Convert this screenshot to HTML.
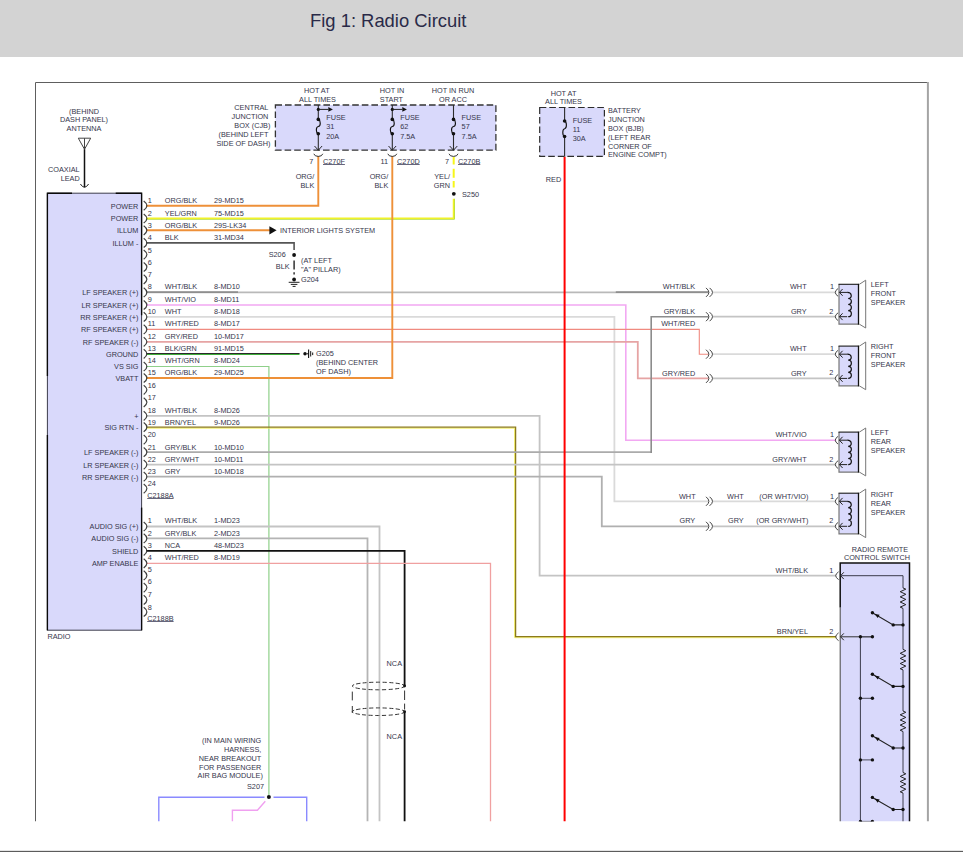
<!DOCTYPE html>
<html><head><meta charset="utf-8"><title>Fig 1: Radio Circuit</title>
<style>
html,body{margin:0;padding:0;background:#fff;}
body{width:963px;height:852px;overflow:hidden;position:relative;font-family:"Liberation Sans",sans-serif;}
#hdr{position:absolute;left:0;top:0;width:963px;height:57px;background:#d3d3d3;}
#ttl{position:absolute;left:310px;top:10.2px;font-size:18.4px;line-height:22px;color:#2a2a48;white-space:nowrap;font-family:"Liberation Sans",sans-serif;}
#btm{position:absolute;left:0;top:850px;width:963px;height:2px;background:linear-gradient(#e4e4e4 0,#e4e4e4 50%,#5c5c5c 50%,#5c5c5c 100%);}
svg{position:absolute;left:0;top:0;}
svg text{font-family:"Liberation Sans",sans-serif;}
</style></head><body>
<div id="hdr"></div><div id="ttl">Fig 1: Radio Circuit</div>
<svg width="963" height="852" viewBox="0 0 963 852">
<defs><clipPath id="cp"><rect x="0" y="60" width="963" height="761.5"/></clipPath></defs>
<g clip-path="url(#cp)">
<path d="M35.5 821.5 L35.5 82.5 L927 82.5" stroke="#5e5e5e" stroke-width="1" fill="none"/>
<path d="M927.9 82 L927.9 821.5" stroke="#a4a4a4" stroke-width="2" fill="none"/>
<rect x="47.4" y="193.2" width="94.1" height="437" fill="#d9d9fb"/>
<path d="M47.4 630.2 L47.4 193.2 L141.6 193.2 L141.6 630.2 Z" stroke="#3c3c4c" stroke-width="1.0" fill="none"/>
<path d="M47.4 376 L47.4 193.2 L72 193.2" stroke="#0a0a0a" stroke-width="1.35" fill="none"/>
<path d="M115.7 193.2 L141.6 193.2 L141.6 315.2" stroke="#0a0a0a" stroke-width="1.35" fill="none"/>
<path d="M141.6 507.6 L141.6 630.4" stroke="#0a0a0a" stroke-width="1.35" fill="none"/>
<path d="M47.4 630.4 L47.4 435" stroke="#0a0a0a" stroke-width="1.35" fill="none"/>
<path d="M146.0 205.7 L318.3 205.7 L318.3 156.0" stroke="#ee9038" stroke-width="1.9" fill="none" />
<path d="M146.0 219.2 L454.5 219.2 L454.5 198.8" stroke="#9ad64e" stroke-width="1.0" fill="none" />
<path d="M146.0 218.3 L453.6 218.3 L453.6 198.8" stroke="#f0f228" stroke-width="1.7" fill="none" />
<path d="M453.7 157.0 L453.7 164.6" stroke="#f6f61a" stroke-width="2.0" fill="none" />
<path d="M453.7 168.8 L453.7 177.7" stroke="#f6f61a" stroke-width="2.0" fill="none" />
<path d="M453.7 181.0 L453.7 187.6" stroke="#f6f61a" stroke-width="2.0" fill="none" />
<path d="M146.0 230.3 L270.0 230.3" stroke="#ee9038" stroke-width="1.9" fill="none" />
<path d="M269.4 226.2 L276.6 230.3 L269.4 234.4 Z" fill="#111"/>
<path d="M146.0 242.9 L294.1 242.9 L294.1 250.0" stroke="#555555" stroke-width="1.6" fill="none" />
<path d="M294.1 260.5 L294.1 269.5" stroke="#222" stroke-width="1.4" fill="none" />
<path d="M294.1 272.2 L294.1 274.4" stroke="#222" stroke-width="1.4" fill="none" />
<circle cx="294.1" cy="255.0" r="1.9" fill="#111"/>
<circle cx="294.1" cy="279.5" r="1.9" fill="#111"/>
<path d="M288.7 282.3 L299.5 282.3" stroke="#222" stroke-width="1.0" fill="none" />
<path d="M290.8 284.4 L297.4 284.4" stroke="#222" stroke-width="1.0" fill="none" />
<path d="M292.6 286.4 L295.6 286.4" stroke="#222" stroke-width="1.0" fill="none" />
<path d="M146.0 292.4 L708.5 292.4" stroke="#b9b9b9" stroke-width="1.8" fill="none" />
<path d="M146.0 292.0 L238.0 292.0" stroke="#5c5c5c" stroke-width="0.9" fill="none" />
<path d="M615.8 292.0 L708.5 292.0" stroke="#5c5c5c" stroke-width="0.9" fill="none" />
<path d="M713.0 292.4 L836.2 292.4" stroke="#dadada" stroke-width="1.8" fill="none" />
<path d="M146.0 305.0 L625.8 305.0 L625.8 440.2 L836.2 440.2" stroke="#f2a8f2" stroke-width="1.6" fill="none" />
<path d="M146.0 316.9 L614.4 316.9 L614.4 501.3 L708.5 501.3" stroke="#dadada" stroke-width="1.8" fill="none" />
<path d="M713.0 501.3 L836.2 501.3" stroke="#dadada" stroke-width="1.8" fill="none" />
<path d="M146.0 329.4 L699.3 329.4 L699.3 354.2 L708.5 354.2" stroke="#f08a80" stroke-width="1.1" fill="none" />
<path d="M713.0 354.2 L836.2 354.2" stroke="#dadada" stroke-width="1.8" fill="none" />
<path d="M146.0 341.8 L637.8 341.8 L637.8 378.4 L708.5 378.4" stroke="#e6a4a4" stroke-width="1.8" fill="none" />
<path d="M713.0 378.4 L836.2 378.4" stroke="#c4c4c4" stroke-width="1.8" fill="none" />
<path d="M146.0 354.3 L299.5 354.3" stroke="#3fae3a" stroke-width="1.6" fill="none" />
<path d="M146.0 353.5 L299.5 353.5" stroke="#2a2a2a" stroke-width="1.0" fill="none" />
<path d="M146.0 366.5 L268.9 366.5 L268.9 795.0" stroke="#8fd08a" stroke-width="1.2" fill="none" />
<path d="M146.0 415.8 L539.6 415.8 L539.6 575.7 L836.2 575.7" stroke="#c4c4c4" stroke-width="1.8" fill="none" />
<path d="M146.0 428.2 L514.6 428.2 L514.6 637.7 L836.2 637.7" stroke="#f0ee58" stroke-width="0.9" fill="none" />
<path d="M146.0 427.2 L515.6 427.2 L515.6 636.7 L836.2 636.7" stroke="#8c7a1c" stroke-width="1.3" fill="none" />
<path d="M146.0 452.2 L651.2 452.2" stroke="#ababab" stroke-width="1.8" fill="none" />
<path d="M651.2 453.1 L651.2 316.7 L708.5 316.7" stroke="#8c8c8c" stroke-width="1.6" fill="none" />
<path d="M713.0 316.7 L836.2 316.7" stroke="#c4c4c4" stroke-width="1.8" fill="none" />
<path d="M146.0 464.6 L836.2 464.6" stroke="#c4c4c4" stroke-width="1.8" fill="none" />
<path d="M146.0 476.7 L601.8 476.7 L601.8 526.3 L708.5 526.3" stroke="#b0b0b0" stroke-width="1.8" fill="none" />
<path d="M713.0 526.3 L836.2 526.3" stroke="#c4c4c4" stroke-width="1.8" fill="none" />
<path d="M146.0 526.5 L379.5 526.5 L379.5 821.5" stroke="#c4c4c4" stroke-width="1.8" fill="none" />
<path d="M146.0 538.4 L367.5 538.4 L367.5 821.5" stroke="#b4b4b4" stroke-width="1.8" fill="none" />
<path d="M146.0 550.8 L404.6 550.8 L404.6 686.2" stroke="#111" stroke-width="1.8" fill="none" />
<path d="M404.6 711.6 L404.6 821.5" stroke="#111" stroke-width="1.8" fill="none" />
<path d="M404.6 690.5 L404.6 700.0" stroke="#333" stroke-width="1.0" fill="none" />
<path d="M404.6 703.6 L404.6 709.5" stroke="#333" stroke-width="1.0" fill="none" />
<path d="M146.0 563.3 L490.5 563.3 L490.5 821.5" stroke="#f0a0a0" stroke-width="1.3" fill="none" />
<path d="M146.0 378.0 L392.3 378.0 L392.3 156.0" stroke="#ee9038" stroke-width="1.9" fill="none" />
<path d="M564.6 156.4 L564.6 821.5" stroke="#ff0000" stroke-width="2.0" fill="none" />
<path d="M158.8 821.5 L158.8 797.2 L264.5 797.2" stroke="#8a8aff" stroke-width="1.4" fill="none" />
<path d="M273.5 797.2 L306.7 797.2 L306.7 821.5" stroke="#8a8aff" stroke-width="1.4" fill="none" />
<path d="M232.4 821.5 L232.4 810.3 L257.4 810.3 L265.3 801.3" stroke="#f0a0f0" stroke-width="1.4" fill="none" />
<circle cx="268.9" cy="797.0" r="2.0" fill="#111"/>
<path d="M143.7 201.1 Q150.1 205.7 143.7 210.3" stroke="#404040" stroke-width="1.2" fill="none"/>
<text x="147.8" y="203.0" text-anchor="start" font-size="7.3" fill="#36364c" >1</text>
<text x="138.4" y="208.6" text-anchor="end" font-size="7.3" fill="#36364c" >POWER</text>
<text x="164.8" y="203.0" text-anchor="start" font-size="7.3" fill="#36364c" >ORG/BLK</text>
<text x="213.9" y="203.0" text-anchor="start" font-size="7.3" fill="#36364c" >29-MD15</text>
<path d="M143.7 213.9 Q150.1 218.5 143.7 223.1" stroke="#404040" stroke-width="1.2" fill="none"/>
<text x="147.8" y="216.0" text-anchor="start" font-size="7.3" fill="#36364c" >2</text>
<text x="138.4" y="221.4" text-anchor="end" font-size="7.3" fill="#36364c" >POWER</text>
<text x="164.8" y="216.0" text-anchor="start" font-size="7.3" fill="#36364c" >YEL/GRN</text>
<text x="213.9" y="216.0" text-anchor="start" font-size="7.3" fill="#36364c" >75-MD15</text>
<path d="M143.7 225.7 Q150.1 230.3 143.7 234.9" stroke="#404040" stroke-width="1.2" fill="none"/>
<text x="147.8" y="228.0" text-anchor="start" font-size="7.3" fill="#36364c" >3</text>
<text x="138.4" y="233.2" text-anchor="end" font-size="7.3" fill="#36364c" >ILLUM</text>
<text x="164.8" y="228.0" text-anchor="start" font-size="7.3" fill="#36364c" >ORG/BLK</text>
<text x="213.9" y="228.0" text-anchor="start" font-size="7.3" fill="#36364c" >29S-LK34</text>
<path d="M143.7 238.3 Q150.1 242.9 143.7 247.5" stroke="#404040" stroke-width="1.2" fill="none"/>
<text x="147.8" y="240.0" text-anchor="start" font-size="7.3" fill="#36364c" >4</text>
<text x="138.4" y="245.8" text-anchor="end" font-size="7.3" fill="#36364c" >ILLUM -</text>
<text x="164.8" y="240.0" text-anchor="start" font-size="7.3" fill="#36364c" >BLK</text>
<text x="213.9" y="240.0" text-anchor="start" font-size="7.3" fill="#36364c" >31-MD34</text>
<path d="M143.7 250.0 Q150.1 254.6 143.7 259.2" stroke="#404040" stroke-width="1.2" fill="none"/>
<text x="147.8" y="253.0" text-anchor="start" font-size="7.3" fill="#36364c" >5</text>
<path d="M143.7 262.4 Q150.1 267.0 143.7 271.6" stroke="#404040" stroke-width="1.2" fill="none"/>
<text x="147.8" y="265.0" text-anchor="start" font-size="7.3" fill="#36364c" >6</text>
<path d="M143.7 274.7 Q150.1 279.3 143.7 283.9" stroke="#404040" stroke-width="1.2" fill="none"/>
<text x="147.8" y="277.0" text-anchor="start" font-size="7.3" fill="#36364c" >7</text>
<path d="M143.7 287.8 Q150.1 292.4 143.7 297.0" stroke="#404040" stroke-width="1.2" fill="none"/>
<text x="147.8" y="289.0" text-anchor="start" font-size="7.3" fill="#36364c" >8</text>
<text x="138.4" y="295.3" text-anchor="end" font-size="7.3" fill="#36364c" >LF SPEAKER (+)</text>
<text x="164.8" y="289.0" text-anchor="start" font-size="7.3" fill="#36364c" >WHT/BLK</text>
<text x="213.9" y="289.0" text-anchor="start" font-size="7.3" fill="#36364c" >8-MD10</text>
<path d="M143.7 300.4 Q150.1 305.0 143.7 309.6" stroke="#404040" stroke-width="1.2" fill="none"/>
<text x="147.8" y="302.0" text-anchor="start" font-size="7.3" fill="#36364c" >9</text>
<text x="138.4" y="307.9" text-anchor="end" font-size="7.3" fill="#36364c" >LR SPEAKER (+)</text>
<text x="164.8" y="302.0" text-anchor="start" font-size="7.3" fill="#36364c" >WHT/VIO</text>
<text x="213.9" y="302.0" text-anchor="start" font-size="7.3" fill="#36364c" >8-MD11</text>
<path d="M143.7 312.3 Q150.1 316.9 143.7 321.5" stroke="#404040" stroke-width="1.2" fill="none"/>
<text x="147.8" y="314.0" text-anchor="start" font-size="7.3" fill="#36364c" >10</text>
<text x="138.4" y="319.8" text-anchor="end" font-size="7.3" fill="#36364c" >RR SPEAKER (+)</text>
<text x="164.8" y="314.0" text-anchor="start" font-size="7.3" fill="#36364c" >WHT</text>
<text x="213.9" y="314.0" text-anchor="start" font-size="7.3" fill="#36364c" >8-MD18</text>
<path d="M143.7 324.8 Q150.1 329.4 143.7 334.0" stroke="#404040" stroke-width="1.2" fill="none"/>
<text x="147.8" y="326.0" text-anchor="start" font-size="7.3" fill="#36364c" >11</text>
<text x="138.4" y="332.3" text-anchor="end" font-size="7.3" fill="#36364c" >RF SPEAKER (+)</text>
<text x="164.8" y="326.0" text-anchor="start" font-size="7.3" fill="#36364c" >WHT/RED</text>
<text x="213.9" y="326.0" text-anchor="start" font-size="7.3" fill="#36364c" >8-MD17</text>
<path d="M143.7 337.2 Q150.1 341.8 143.7 346.4" stroke="#404040" stroke-width="1.2" fill="none"/>
<text x="147.8" y="339.0" text-anchor="start" font-size="7.3" fill="#36364c" >12</text>
<text x="138.4" y="344.7" text-anchor="end" font-size="7.3" fill="#36364c" >RF SPEAKER (-)</text>
<text x="164.8" y="339.0" text-anchor="start" font-size="7.3" fill="#36364c" >GRY/RED</text>
<text x="213.9" y="339.0" text-anchor="start" font-size="7.3" fill="#36364c" >10-MD17</text>
<path d="M143.7 349.2 Q150.1 353.8 143.7 358.4" stroke="#404040" stroke-width="1.2" fill="none"/>
<text x="147.8" y="351.0" text-anchor="start" font-size="7.3" fill="#36364c" >13</text>
<text x="138.4" y="356.7" text-anchor="end" font-size="7.3" fill="#36364c" >GROUND</text>
<text x="164.8" y="351.0" text-anchor="start" font-size="7.3" fill="#36364c" >BLK/GRN</text>
<text x="213.9" y="351.0" text-anchor="start" font-size="7.3" fill="#36364c" >91-MD15</text>
<path d="M143.7 361.9 Q150.1 366.5 143.7 371.1" stroke="#404040" stroke-width="1.2" fill="none"/>
<text x="147.8" y="363.0" text-anchor="start" font-size="7.3" fill="#36364c" >14</text>
<text x="138.4" y="369.4" text-anchor="end" font-size="7.3" fill="#36364c" >VS SIG</text>
<text x="164.8" y="363.0" text-anchor="start" font-size="7.3" fill="#36364c" >WHT/GRN</text>
<text x="213.9" y="363.0" text-anchor="start" font-size="7.3" fill="#36364c" >8-MD24</text>
<path d="M143.7 373.4 Q150.1 378.0 143.7 382.6" stroke="#404040" stroke-width="1.2" fill="none"/>
<text x="147.8" y="375.0" text-anchor="start" font-size="7.3" fill="#36364c" >15</text>
<text x="138.4" y="380.9" text-anchor="end" font-size="7.3" fill="#36364c" >VBATT</text>
<text x="164.8" y="375.0" text-anchor="start" font-size="7.3" fill="#36364c" >ORG/BLK</text>
<text x="213.9" y="375.0" text-anchor="start" font-size="7.3" fill="#36364c" >29-MD25</text>
<path d="M143.7 385.2 Q150.1 389.8 143.7 394.4" stroke="#404040" stroke-width="1.2" fill="none"/>
<text x="147.8" y="388.0" text-anchor="start" font-size="7.3" fill="#36364c" >16</text>
<path d="M143.7 397.7 Q150.1 402.3 143.7 406.9" stroke="#404040" stroke-width="1.2" fill="none"/>
<text x="147.8" y="400.0" text-anchor="start" font-size="7.3" fill="#36364c" >17</text>
<path d="M143.7 411.2 Q150.1 415.8 143.7 420.4" stroke="#404040" stroke-width="1.2" fill="none"/>
<text x="147.8" y="413.0" text-anchor="start" font-size="7.3" fill="#36364c" >18</text>
<text x="138.4" y="418.7" text-anchor="end" font-size="7.3" fill="#36364c" >+</text>
<text x="164.8" y="413.0" text-anchor="start" font-size="7.3" fill="#36364c" >WHT/BLK</text>
<text x="213.9" y="413.0" text-anchor="start" font-size="7.3" fill="#36364c" >8-MD26</text>
<path d="M143.7 422.6 Q150.1 427.2 143.7 431.8" stroke="#404040" stroke-width="1.2" fill="none"/>
<text x="147.8" y="425.0" text-anchor="start" font-size="7.3" fill="#36364c" >19</text>
<text x="138.4" y="430.1" text-anchor="end" font-size="7.3" fill="#36364c" >SIG RTN -</text>
<text x="164.8" y="425.0" text-anchor="start" font-size="7.3" fill="#36364c" >BRN/YEL</text>
<text x="213.9" y="425.0" text-anchor="start" font-size="7.3" fill="#36364c" >9-MD26</text>
<path d="M143.7 435.0 Q150.1 439.6 143.7 444.2" stroke="#404040" stroke-width="1.2" fill="none"/>
<text x="147.8" y="437.0" text-anchor="start" font-size="7.3" fill="#36364c" >20</text>
<path d="M143.7 447.6 Q150.1 452.2 143.7 456.8" stroke="#404040" stroke-width="1.2" fill="none"/>
<text x="147.8" y="450.0" text-anchor="start" font-size="7.3" fill="#36364c" >21</text>
<text x="138.4" y="455.1" text-anchor="end" font-size="7.3" fill="#36364c" >LF SPEAKER (-)</text>
<text x="164.8" y="450.0" text-anchor="start" font-size="7.3" fill="#36364c" >GRY/BLK</text>
<text x="213.9" y="450.0" text-anchor="start" font-size="7.3" fill="#36364c" >10-MD10</text>
<path d="M143.7 460.0 Q150.1 464.6 143.7 469.2" stroke="#404040" stroke-width="1.2" fill="none"/>
<text x="147.8" y="462.0" text-anchor="start" font-size="7.3" fill="#36364c" >22</text>
<text x="138.4" y="467.5" text-anchor="end" font-size="7.3" fill="#36364c" >LR SPEAKER (-)</text>
<text x="164.8" y="462.0" text-anchor="start" font-size="7.3" fill="#36364c" >GRY/WHT</text>
<text x="213.9" y="462.0" text-anchor="start" font-size="7.3" fill="#36364c" >10-MD11</text>
<path d="M143.7 472.1 Q150.1 476.7 143.7 481.3" stroke="#404040" stroke-width="1.2" fill="none"/>
<text x="147.8" y="474.0" text-anchor="start" font-size="7.3" fill="#36364c" >23</text>
<text x="138.4" y="479.6" text-anchor="end" font-size="7.3" fill="#36364c" >RR SPEAKER (-)</text>
<text x="164.8" y="474.0" text-anchor="start" font-size="7.3" fill="#36364c" >GRY</text>
<text x="213.9" y="474.0" text-anchor="start" font-size="7.3" fill="#36364c" >10-MD18</text>
<path d="M143.7 484.0 Q150.1 488.6 143.7 493.2" stroke="#404040" stroke-width="1.2" fill="none"/>
<text x="147.8" y="486.0" text-anchor="start" font-size="7.3" fill="#36364c" >24</text>
<path d="M143.7 521.9 Q150.1 526.5 143.7 531.1" stroke="#404040" stroke-width="1.2" fill="none"/>
<text x="147.8" y="523.0" text-anchor="start" font-size="7.3" fill="#36364c" >1</text>
<text x="138.4" y="529.4" text-anchor="end" font-size="7.3" fill="#36364c" >AUDIO SIG (+)</text>
<text x="164.8" y="523.0" text-anchor="start" font-size="7.3" fill="#36364c" >WHT/BLK</text>
<text x="213.9" y="523.0" text-anchor="start" font-size="7.3" fill="#36364c" >1-MD23</text>
<path d="M143.7 533.8 Q150.1 538.4 143.7 543.0" stroke="#404040" stroke-width="1.2" fill="none"/>
<text x="147.8" y="536.0" text-anchor="start" font-size="7.3" fill="#36364c" >2</text>
<text x="138.4" y="541.3" text-anchor="end" font-size="7.3" fill="#36364c" >AUDIO SIG (-)</text>
<text x="164.8" y="536.0" text-anchor="start" font-size="7.3" fill="#36364c" >GRY/BLK</text>
<text x="213.9" y="536.0" text-anchor="start" font-size="7.3" fill="#36364c" >2-MD23</text>
<path d="M143.7 546.2 Q150.1 550.8 143.7 555.4" stroke="#404040" stroke-width="1.2" fill="none"/>
<text x="147.8" y="548.0" text-anchor="start" font-size="7.3" fill="#36364c" >3</text>
<text x="138.4" y="553.7" text-anchor="end" font-size="7.3" fill="#36364c" >SHIELD</text>
<text x="164.8" y="548.0" text-anchor="start" font-size="7.3" fill="#36364c" >NCA</text>
<text x="213.9" y="548.0" text-anchor="start" font-size="7.3" fill="#36364c" >48-MD23</text>
<path d="M143.7 558.7 Q150.1 563.3 143.7 567.9" stroke="#404040" stroke-width="1.2" fill="none"/>
<text x="147.8" y="560.0" text-anchor="start" font-size="7.3" fill="#36364c" >4</text>
<text x="138.4" y="566.2" text-anchor="end" font-size="7.3" fill="#36364c" >AMP ENABLE</text>
<text x="164.8" y="560.0" text-anchor="start" font-size="7.3" fill="#36364c" >WHT/RED</text>
<text x="213.9" y="560.0" text-anchor="start" font-size="7.3" fill="#36364c" >8-MD19</text>
<path d="M143.7 570.8 Q150.1 575.4 143.7 580.0" stroke="#404040" stroke-width="1.2" fill="none"/>
<text x="147.8" y="572.0" text-anchor="start" font-size="7.3" fill="#36364c" >5</text>
<path d="M143.7 583.0 Q150.1 587.6 143.7 592.2" stroke="#404040" stroke-width="1.2" fill="none"/>
<text x="147.8" y="584.0" text-anchor="start" font-size="7.3" fill="#36364c" >6</text>
<path d="M143.7 595.3 Q150.1 599.9 143.7 604.5" stroke="#404040" stroke-width="1.2" fill="none"/>
<text x="147.8" y="597.0" text-anchor="start" font-size="7.3" fill="#36364c" >7</text>
<path d="M143.7 607.3 Q150.1 611.9 143.7 616.5" stroke="#404040" stroke-width="1.2" fill="none"/>
<text x="147.8" y="610.0" text-anchor="start" font-size="7.3" fill="#36364c" >8</text>
<text x="147.2" y="498.0" text-anchor="start" font-size="7.3" fill="#36364c" >C2188A</text>
<path d="M147.2 498.5 L173.6 498.5" stroke="#66667c" stroke-width="1" fill="none"/>
<text x="147.2" y="621.0" text-anchor="start" font-size="7.3" fill="#36364c" >C2188B</text>
<path d="M147.2 621.5 L173.6 621.5" stroke="#66667c" stroke-width="1" fill="none"/>
<text x="47.4" y="639.0" text-anchor="start" font-size="7.3" fill="#36364c" >RADIO</text>
<path d="M78.3 138.2 L90.7 138.2 L84.5 149.3 Z" stroke="#444" stroke-width="1" fill="none"/>
<path d="M84.5 138.2 L84.5 149.3" stroke="#444" stroke-width="1.0" fill="none" />
<path d="M84.5 149.3 L84.5 187.3" stroke="#111" stroke-width="1.5" fill="none" />
<path d="M80.4 184 Q84.5 190.5 88.6 184" stroke="#222" stroke-width="1" fill="none"/>
<text x="84.0" y="113.8" text-anchor="middle" font-size="7.3" fill="#36364c" >(BEHIND</text>
<text x="84.0" y="122.3" text-anchor="middle" font-size="7.3" fill="#36364c" >DASH PANEL)</text>
<text x="84.0" y="130.8" text-anchor="middle" font-size="7.3" fill="#36364c" >ANTENNA</text>
<text x="79.7" y="171.8" text-anchor="end" font-size="7.3" fill="#36364c" >COAXIAL</text>
<text x="79.7" y="180.8" text-anchor="end" font-size="7.3" fill="#36364c" >LEAD</text>
<rect x="275.4" y="105" width="220.5" height="45.2" fill="#d9d9fb" stroke="#333" stroke-width="1.3" stroke-dasharray="6.6 3"/>
<path d="M318.3 105.0 L318.3 119.4" stroke="#2c2c2c" stroke-width="1.1" fill="none" />
<path d="M318.3 133.7 L318.3 150.2" stroke="#2c2c2c" stroke-width="1.1" fill="none" />
<path d="M318.3 119.4 C320.9 120.4 320.9 126.0 318.3 126.5 C315.7 127.0 315.7 132.7 318.3 133.7" stroke="#111" stroke-width="1.15" fill="none"/>
<circle cx="318.3" cy="119.4" r="1.8" fill="#111"/>
<circle cx="318.3" cy="133.7" r="1.8" fill="#111"/>
<path d="M314.5 146.0 L318.3 150.2 L322.1 146.0" stroke="#2c2c2c" stroke-width="1" fill="none"/>
<path d="M313.8 153.8 A4.6 3.3 0 0 0 322.8 153.8" stroke="#333" stroke-width="1" fill="none"/>
<circle cx="318.3" cy="109.4" r="1.6" fill="#111"/>
<path d="M318.3 109.4 L328.3 109.4" stroke="#222" stroke-width="1.0" fill="none" />
<path d="M328.3 107.1 L332.9 109.4 L328.3 111.7 Z" fill="#111"/>
<path d="M392.3 105.0 L392.3 119.4" stroke="#2c2c2c" stroke-width="1.1" fill="none" />
<path d="M392.3 133.7 L392.3 150.2" stroke="#2c2c2c" stroke-width="1.1" fill="none" />
<path d="M392.3 119.4 C394.9 120.4 394.9 126.0 392.3 126.5 C389.7 127.0 389.7 132.7 392.3 133.7" stroke="#111" stroke-width="1.15" fill="none"/>
<circle cx="392.3" cy="119.4" r="1.8" fill="#111"/>
<circle cx="392.3" cy="133.7" r="1.8" fill="#111"/>
<path d="M388.5 146.0 L392.3 150.2 L396.1 146.0" stroke="#2c2c2c" stroke-width="1" fill="none"/>
<path d="M387.8 153.8 A4.6 3.3 0 0 0 396.8 153.8" stroke="#333" stroke-width="1" fill="none"/>
<circle cx="392.3" cy="109.4" r="1.6" fill="#111"/>
<path d="M392.3 109.4 L402.3 109.4" stroke="#222" stroke-width="1.0" fill="none" />
<path d="M402.3 107.1 L406.9 109.4 L402.3 111.7 Z" fill="#111"/>
<path d="M453.5 105.0 L453.5 119.4" stroke="#2c2c2c" stroke-width="1.1" fill="none" />
<path d="M453.5 133.7 L453.5 150.2" stroke="#2c2c2c" stroke-width="1.1" fill="none" />
<path d="M453.5 119.4 C456.1 120.4 456.1 126.0 453.5 126.5 C450.9 127.0 450.9 132.7 453.5 133.7" stroke="#111" stroke-width="1.15" fill="none"/>
<circle cx="453.5" cy="119.4" r="1.8" fill="#111"/>
<circle cx="453.5" cy="133.7" r="1.8" fill="#111"/>
<path d="M449.7 146.0 L453.5 150.2 L457.3 146.0" stroke="#2c2c2c" stroke-width="1" fill="none"/>
<path d="M449.0 153.8 A4.6 3.3 0 0 0 458.0 153.8" stroke="#333" stroke-width="1" fill="none"/>
<text x="326.2" y="119.9" text-anchor="start" font-size="7.3" fill="#36364c" >FUSE</text>
<text x="326.2" y="129.0" text-anchor="start" font-size="7.3" fill="#36364c" >31</text>
<text x="326.2" y="139.0" text-anchor="start" font-size="7.3" fill="#36364c" >20A</text>
<text x="400.2" y="119.9" text-anchor="start" font-size="7.3" fill="#36364c" >FUSE</text>
<text x="400.2" y="129.0" text-anchor="start" font-size="7.3" fill="#36364c" >62</text>
<text x="400.2" y="139.0" text-anchor="start" font-size="7.3" fill="#36364c" >7.5A</text>
<text x="461.6" y="119.9" text-anchor="start" font-size="7.3" fill="#36364c" >FUSE</text>
<text x="461.6" y="129.0" text-anchor="start" font-size="7.3" fill="#36364c" >57</text>
<text x="461.6" y="139.0" text-anchor="start" font-size="7.3" fill="#36364c" >7.5A</text>
<text x="316.8" y="93.2" text-anchor="middle" font-size="7.3" fill="#36364c" >HOT AT</text>
<text x="317.5" y="102.0" text-anchor="middle" font-size="7.3" fill="#36364c" >ALL TIMES</text>
<text x="392.0" y="93.2" text-anchor="middle" font-size="7.3" fill="#36364c" >HOT IN</text>
<text x="391.4" y="102.0" text-anchor="middle" font-size="7.3" fill="#36364c" >START</text>
<text x="453.0" y="93.2" text-anchor="middle" font-size="7.3" fill="#36364c" >HOT IN RUN</text>
<text x="453.0" y="102.0" text-anchor="middle" font-size="7.3" fill="#36364c" >OR ACC</text>
<text x="268.4" y="110.2" text-anchor="end" font-size="7.3" fill="#36364c" >CENTRAL</text>
<text x="268.4" y="119.2" text-anchor="end" font-size="7.3" fill="#36364c" >JUNCTION</text>
<text x="270.4" y="128.2" text-anchor="end" font-size="7.3" fill="#36364c" >BOX (CJB)</text>
<text x="268.4" y="137.2" text-anchor="end" font-size="7.3" fill="#36364c" >(BEHIND LEFT</text>
<text x="270.4" y="146.2" text-anchor="end" font-size="7.3" fill="#36364c" >SIDE OF DASH)</text>
<text x="313.3" y="164.4" text-anchor="end" font-size="7.3" fill="#36364c" >7</text>
<text x="323.0" y="164.4" text-anchor="start" font-size="7.3" fill="#36364c" >C270F</text>
<path d="M323.0 164.5 L344.9 164.5" stroke="#66667c" stroke-width="1" fill="none"/>
<text x="388.0" y="164.4" text-anchor="end" font-size="7.3" fill="#36364c" >11</text>
<text x="397.0" y="164.4" text-anchor="start" font-size="7.3" fill="#36364c" >C270D</text>
<path d="M397.0 164.5 L419.7 164.5" stroke="#66667c" stroke-width="1" fill="none"/>
<text x="449.0" y="164.4" text-anchor="end" font-size="7.3" fill="#36364c" >7</text>
<text x="458.0" y="164.4" text-anchor="start" font-size="7.3" fill="#36364c" >C270B</text>
<path d="M458.0 164.5 L480.3 164.5" stroke="#66667c" stroke-width="1" fill="none"/>
<text x="314.3" y="179.0" text-anchor="end" font-size="7.3" fill="#36364c" >ORG/</text>
<text x="314.3" y="188.2" text-anchor="end" font-size="7.3" fill="#36364c" >BLK</text>
<text x="388.3" y="179.0" text-anchor="end" font-size="7.3" fill="#36364c" >ORG/</text>
<text x="388.3" y="188.2" text-anchor="end" font-size="7.3" fill="#36364c" >BLK</text>
<text x="450.0" y="179.0" text-anchor="end" font-size="7.3" fill="#36364c" >YEL/</text>
<text x="450.0" y="188.2" text-anchor="end" font-size="7.3" fill="#36364c" >GRN</text>
<circle cx="453.8" cy="193.8" r="1.9" fill="#111"/>
<text x="462.0" y="196.6" text-anchor="start" font-size="7.3" fill="#36364c" >S250</text>
<rect x="539.7" y="107.5" width="64.7" height="48.9" fill="#d9d9fb" stroke="#2c2c2c" stroke-width="1.2" stroke-dasharray="6.6 3"/>
<path d="M564.6 107.5 L564.6 121.0" stroke="#2c2c2c" stroke-width="1.1" fill="none" />
<path d="M564.6 136.5 L564.6 156.4" stroke="#2c2c2c" stroke-width="1.1" fill="none" />
<path d="M564.6 121.0 C567.0 122.0 567.0 128.2 564.6 128.8 C562.2 129.2 562.2 135.5 564.6 136.5" stroke="#111" stroke-width="1.15" fill="none"/>
<circle cx="564.6" cy="121.0" r="1.8" fill="#111"/>
<circle cx="564.6" cy="136.5" r="1.8" fill="#111"/>
<text x="572.7" y="123.0" text-anchor="start" font-size="7.3" fill="#36364c" >FUSE</text>
<text x="572.7" y="131.9" text-anchor="start" font-size="7.3" fill="#36364c" >11</text>
<text x="572.7" y="140.7" text-anchor="start" font-size="7.3" fill="#36364c" >30A</text>
<text x="563.5" y="95.8" text-anchor="middle" font-size="7.3" fill="#36364c" >HOT AT</text>
<text x="563.5" y="103.9" text-anchor="middle" font-size="7.3" fill="#36364c" >ALL TIMES</text>
<text x="608.0" y="112.9" text-anchor="start" font-size="7.3" fill="#36364c" >BATTERY</text>
<text x="608.0" y="121.8" text-anchor="start" font-size="7.3" fill="#36364c" >JUNCTION</text>
<text x="608.0" y="130.7" text-anchor="start" font-size="7.3" fill="#36364c" >BOX (BJB)</text>
<text x="608.0" y="139.6" text-anchor="start" font-size="7.3" fill="#36364c" >(LEFT REAR</text>
<text x="608.0" y="148.5" text-anchor="start" font-size="7.3" fill="#36364c" >CORNER OF</text>
<text x="608.0" y="157.4" text-anchor="start" font-size="7.3" fill="#36364c" >ENGINE COMPT)</text>
<text x="545.8" y="181.7" text-anchor="start" font-size="7.3" fill="#36364c" >RED</text>
<text x="279.9" y="232.8" text-anchor="start" font-size="7.3" fill="#36364c" >INTERIOR LIGHTS SYSTEM</text>
<text x="268.7" y="256.6" text-anchor="start" font-size="7.3" fill="#36364c" >S206</text>
<text x="275.8" y="268.7" text-anchor="start" font-size="7.3" fill="#36364c" >BLK</text>
<text x="301.0" y="262.8" text-anchor="start" font-size="7.3" fill="#36364c" >(AT LEFT</text>
<text x="301.0" y="271.7" text-anchor="start" font-size="7.3" fill="#36364c" >&quot;A&quot; PILLAR)</text>
<text x="301.0" y="281.8" text-anchor="start" font-size="7.3" fill="#36364c" >G204</text>
<circle cx="305.0" cy="353.8" r="1.7" fill="#111"/>
<path d="M306.5 353.8 L308.5 353.8" stroke="#111" stroke-width="1.0" fill="none" />
<path d="M308.6 349.6 L308.6 358.0" stroke="#111" stroke-width="1.1" fill="none" />
<path d="M310.7 351.1 L310.7 356.5" stroke="#111" stroke-width="1.0" fill="none" />
<path d="M312.7 352.5 L312.7 355.1" stroke="#111" stroke-width="1.0" fill="none" />
<text x="316.0" y="356.0" text-anchor="start" font-size="7.3" fill="#36364c" >G205</text>
<text x="316.0" y="364.7" text-anchor="start" font-size="7.3" fill="#36364c" >(BEHIND CENTER</text>
<text x="316.0" y="373.6" text-anchor="start" font-size="7.3" fill="#36364c" >OF DASH)</text>
<path d="M706.0 287.9 Q711.8 292.4 706.0 296.9" stroke="#444" stroke-width="1" fill="none"/>
<path d="M709.6 287.9 Q715.4 292.4 709.6 296.9" stroke="#444" stroke-width="1" fill="none"/>
<path d="M706.0 312.2 Q711.8 316.7 706.0 321.2" stroke="#444" stroke-width="1" fill="none"/>
<path d="M709.6 312.2 Q715.4 316.7 709.6 321.2" stroke="#444" stroke-width="1" fill="none"/>
<path d="M706.0 349.7 Q711.8 354.2 706.0 358.7" stroke="#444" stroke-width="1" fill="none"/>
<path d="M709.6 349.7 Q715.4 354.2 709.6 358.7" stroke="#444" stroke-width="1" fill="none"/>
<path d="M706.0 373.9 Q711.8 378.4 706.0 382.9" stroke="#444" stroke-width="1" fill="none"/>
<path d="M709.6 373.9 Q715.4 378.4 709.6 382.9" stroke="#444" stroke-width="1" fill="none"/>
<path d="M706.0 496.8 Q711.8 501.3 706.0 505.8" stroke="#444" stroke-width="1" fill="none"/>
<path d="M709.6 496.8 Q715.4 501.3 709.6 505.8" stroke="#444" stroke-width="1" fill="none"/>
<path d="M706.0 521.8 Q711.8 526.3 706.0 530.8" stroke="#444" stroke-width="1" fill="none"/>
<path d="M709.6 521.8 Q715.4 526.3 709.6 530.8" stroke="#444" stroke-width="1" fill="none"/>
<text x="695.2" y="288.8" text-anchor="end" font-size="7.3" fill="#36364c" >WHT/BLK</text>
<text x="695.2" y="313.6" text-anchor="end" font-size="7.3" fill="#36364c" >GRY/BLK</text>
<text x="695.2" y="325.9" text-anchor="end" font-size="7.3" fill="#36364c" >WHT/RED</text>
<text x="695.2" y="376.0" text-anchor="end" font-size="7.3" fill="#36364c" >GRY/RED</text>
<text x="695.6" y="498.6" text-anchor="end" font-size="7.3" fill="#36364c" >WHT</text>
<text x="695.2" y="522.7" text-anchor="end" font-size="7.3" fill="#36364c" >GRY</text>
<text x="727.0" y="498.6" text-anchor="start" font-size="7.3" fill="#36364c" >WHT</text>
<text x="728.0" y="522.7" text-anchor="start" font-size="7.3" fill="#36364c" >GRY</text>
<text x="808.4" y="498.6" text-anchor="end" font-size="7.3" fill="#36364c" >(OR WHT/VIO)</text>
<text x="808.4" y="522.7" text-anchor="end" font-size="7.3" fill="#36364c" >(OR GRY/WHT)</text>
<text x="806.6" y="288.8" text-anchor="end" font-size="7.3" fill="#36364c" >WHT</text>
<text x="806.6" y="313.6" text-anchor="end" font-size="7.3" fill="#36364c" >GRY</text>
<text x="806.6" y="350.6" text-anchor="end" font-size="7.3" fill="#36364c" >WHT</text>
<text x="806.6" y="376.0" text-anchor="end" font-size="7.3" fill="#36364c" >GRY</text>
<text x="806.6" y="436.8" text-anchor="end" font-size="7.3" fill="#36364c" >WHT/VIO</text>
<text x="806.6" y="461.6" text-anchor="end" font-size="7.3" fill="#36364c" >GRY/WHT</text>
<text x="808.0" y="572.6" text-anchor="end" font-size="7.3" fill="#36364c" >WHT/BLK</text>
<text x="808.0" y="633.6" text-anchor="end" font-size="7.3" fill="#36364c" >BRN/YEL</text>
<rect x="839.0" y="284.3" width="19.6" height="39.9" fill="#d9d9fb"/>
<path d="M839.0 284.3 L839.0 324.2 L858.6 324.2" stroke="#777" stroke-width="1.2" fill="none" />
<path d="M838.5 284.3 L858.6 284.3" stroke="#1a1a1a" stroke-width="1.1" fill="none" />
<path d="M858.6 283.8 L858.6 324.7" stroke="#111" stroke-width="1.5" fill="none" />
<path d="M859.4 284.3 L865.7 280.2 L865.7 328.0 L859.4 324.2" stroke="#777" stroke-width="1" fill="#fff"/>
<path d="M838.1 288.5 Q832.4 292.4 838.1 296.3" stroke="#444" stroke-width="1" fill="none"/>
<path d="M842.6 289.0 L839.4 292.4 L842.6 295.8" stroke="#222" stroke-width="1" fill="none"/>
<path d="M839.4 292.4 L847.2 292.4" stroke="#222" stroke-width="1.0" fill="none" />
<path d="M838.1 312.8 Q832.4 316.7 838.1 320.6" stroke="#444" stroke-width="1" fill="none"/>
<path d="M842.6 313.3 L839.4 316.7 L842.6 320.1" stroke="#222" stroke-width="1" fill="none"/>
<path d="M839.4 316.7 L847.2 316.7" stroke="#222" stroke-width="1.0" fill="none" />
<path d="M847.2 292.4 C852.4 292.4 852.4 298.5 848.2 298.5 C852.4 298.5 852.4 304.5 848.2 304.5 C852.4 304.5 852.4 310.6 848.2 310.6 C852.4 310.6 852.4 316.7 848.2 316.7" stroke="#111" stroke-width="1.2" fill="none"/>
<text x="832.1" y="289.0" text-anchor="middle" font-size="7.3" fill="#36364c" >1</text>
<text x="831.3" y="314.0" text-anchor="middle" font-size="7.3" fill="#36364c" >2</text>
<text x="870.8" y="287.0" text-anchor="start" font-size="7.3" fill="#36364c" >LEFT</text>
<text x="870.8" y="296.0" text-anchor="start" font-size="7.3" fill="#36364c" >FRONT</text>
<text x="870.8" y="305.0" text-anchor="start" font-size="7.3" fill="#36364c" >SPEAKER</text>
<rect x="839.0" y="346.1" width="19.6" height="39.8" fill="#d9d9fb"/>
<path d="M839.0 346.1 L839.0 385.9 L858.6 385.9" stroke="#777" stroke-width="1.2" fill="none" />
<path d="M838.5 346.1 L858.6 346.1" stroke="#1a1a1a" stroke-width="1.1" fill="none" />
<path d="M858.6 345.6 L858.6 386.4" stroke="#111" stroke-width="1.5" fill="none" />
<path d="M859.4 346.1 L865.7 342.0 L865.7 389.7 L859.4 385.9" stroke="#777" stroke-width="1" fill="#fff"/>
<path d="M838.1 350.3 Q832.4 354.2 838.1 358.1" stroke="#444" stroke-width="1" fill="none"/>
<path d="M842.6 350.8 L839.4 354.2 L842.6 357.6" stroke="#222" stroke-width="1" fill="none"/>
<path d="M839.4 354.2 L847.2 354.2" stroke="#222" stroke-width="1.0" fill="none" />
<path d="M838.1 374.5 Q832.4 378.4 838.1 382.3" stroke="#444" stroke-width="1" fill="none"/>
<path d="M842.6 375.0 L839.4 378.4 L842.6 381.8" stroke="#222" stroke-width="1" fill="none"/>
<path d="M839.4 378.4 L847.2 378.4" stroke="#222" stroke-width="1.0" fill="none" />
<path d="M847.2 354.2 C852.4 354.2 852.4 360.2 848.2 360.2 C852.4 360.2 852.4 366.3 848.2 366.3 C852.4 366.3 852.4 372.3 848.2 372.3 C852.4 372.3 852.4 378.4 848.2 378.4" stroke="#111" stroke-width="1.2" fill="none"/>
<text x="832.1" y="351.0" text-anchor="middle" font-size="7.3" fill="#36364c" >1</text>
<text x="831.3" y="375.0" text-anchor="middle" font-size="7.3" fill="#36364c" >2</text>
<text x="870.8" y="349.0" text-anchor="start" font-size="7.3" fill="#36364c" >RIGHT</text>
<text x="870.8" y="358.0" text-anchor="start" font-size="7.3" fill="#36364c" >FRONT</text>
<text x="870.8" y="367.0" text-anchor="start" font-size="7.3" fill="#36364c" >SPEAKER</text>
<rect x="839.0" y="432.1" width="19.6" height="40.0" fill="#d9d9fb"/>
<path d="M839.0 432.1 L839.0 472.1 L858.6 472.1" stroke="#777" stroke-width="1.2" fill="none" />
<path d="M838.5 432.1 L858.6 432.1" stroke="#1a1a1a" stroke-width="1.1" fill="none" />
<path d="M858.6 431.6 L858.6 472.6" stroke="#111" stroke-width="1.5" fill="none" />
<path d="M859.4 432.1 L865.7 428.0 L865.7 475.9 L859.4 472.1" stroke="#777" stroke-width="1" fill="#fff"/>
<path d="M838.1 436.3 Q832.4 440.2 838.1 444.1" stroke="#444" stroke-width="1" fill="none"/>
<path d="M842.6 436.8 L839.4 440.2 L842.6 443.6" stroke="#222" stroke-width="1" fill="none"/>
<path d="M839.4 440.2 L847.2 440.2" stroke="#222" stroke-width="1.0" fill="none" />
<path d="M838.1 460.7 Q832.4 464.6 838.1 468.5" stroke="#444" stroke-width="1" fill="none"/>
<path d="M842.6 461.2 L839.4 464.6 L842.6 468.0" stroke="#222" stroke-width="1" fill="none"/>
<path d="M839.4 464.6 L847.2 464.6" stroke="#222" stroke-width="1.0" fill="none" />
<path d="M847.2 440.2 C852.4 440.2 852.4 446.3 848.2 446.3 C852.4 446.3 852.4 452.4 848.2 452.4 C852.4 452.4 852.4 458.5 848.2 458.5 C852.4 458.5 852.4 464.6 848.2 464.6" stroke="#111" stroke-width="1.2" fill="none"/>
<text x="832.1" y="437.0" text-anchor="middle" font-size="7.3" fill="#36364c" >1</text>
<text x="831.3" y="462.0" text-anchor="middle" font-size="7.3" fill="#36364c" >2</text>
<text x="870.8" y="435.0" text-anchor="start" font-size="7.3" fill="#36364c" >LEFT</text>
<text x="870.8" y="444.0" text-anchor="start" font-size="7.3" fill="#36364c" >REAR</text>
<text x="870.8" y="453.0" text-anchor="start" font-size="7.3" fill="#36364c" >SPEAKER</text>
<rect x="839.0" y="493.2" width="19.6" height="40.6" fill="#d9d9fb"/>
<path d="M839.0 493.2 L839.0 533.8 L858.6 533.8" stroke="#777" stroke-width="1.2" fill="none" />
<path d="M838.5 493.2 L858.6 493.2" stroke="#1a1a1a" stroke-width="1.1" fill="none" />
<path d="M858.6 492.7 L858.6 534.3" stroke="#111" stroke-width="1.5" fill="none" />
<path d="M859.4 493.2 L865.7 489.1 L865.7 537.6 L859.4 533.8" stroke="#777" stroke-width="1" fill="#fff"/>
<path d="M838.1 497.4 Q832.4 501.3 838.1 505.2" stroke="#444" stroke-width="1" fill="none"/>
<path d="M842.6 497.9 L839.4 501.3 L842.6 504.7" stroke="#222" stroke-width="1" fill="none"/>
<path d="M839.4 501.3 L847.2 501.3" stroke="#222" stroke-width="1.0" fill="none" />
<path d="M838.1 522.4 Q832.4 526.3 838.1 530.2" stroke="#444" stroke-width="1" fill="none"/>
<path d="M842.6 522.9 L839.4 526.3 L842.6 529.7" stroke="#222" stroke-width="1" fill="none"/>
<path d="M839.4 526.3 L847.2 526.3" stroke="#222" stroke-width="1.0" fill="none" />
<path d="M847.2 501.3 C852.4 501.3 852.4 507.6 848.2 507.6 C852.4 507.6 852.4 513.8 848.2 513.8 C852.4 513.8 852.4 520.0 848.2 520.0 C852.4 520.0 852.4 526.3 848.2 526.3" stroke="#111" stroke-width="1.2" fill="none"/>
<text x="832.1" y="499.0" text-anchor="middle" font-size="7.3" fill="#36364c" >1</text>
<text x="831.3" y="523.0" text-anchor="middle" font-size="7.3" fill="#36364c" >2</text>
<text x="870.8" y="497.0" text-anchor="start" font-size="7.3" fill="#36364c" >RIGHT</text>
<text x="870.8" y="506.0" text-anchor="start" font-size="7.3" fill="#36364c" >REAR</text>
<text x="870.8" y="515.0" text-anchor="start" font-size="7.3" fill="#36364c" >SPEAKER</text>
<rect x="840.2" y="562.9" width="69.3" height="258.6" fill="#d9d9fb"/>
<path d="M840.2 821.5 L840.2 607.5" stroke="#555" stroke-width="1.1" fill="none" />
<path d="M840.2 607.5 L840.2 562.9 L909.5 562.9 L909.5 821.5" stroke="#111" stroke-width="1.5" fill="none" />
<text x="880.0" y="551.6" text-anchor="middle" font-size="7.3" fill="#36364c" >RADIO REMOTE</text>
<text x="877.0" y="559.7" text-anchor="middle" font-size="7.3" fill="#36364c" >CONTROL SWITCH</text>
<text x="831.3" y="572.6" text-anchor="middle" font-size="7.3" fill="#36364c" >1</text>
<text x="831.3" y="633.6" text-anchor="middle" font-size="7.3" fill="#36364c" >2</text>
<path d="M838.6 571.8 Q832.8 575.7 838.6 579.6" stroke="#444" stroke-width="1" fill="none"/>
<path d="M843.8 572.3 L840.6 575.7 L843.8 579.1" stroke="#222" stroke-width="1" fill="none"/>
<path d="M838.6 632.9 Q832.8 636.8 838.6 640.7" stroke="#444" stroke-width="1" fill="none"/>
<path d="M843.8 633.4 L840.6 636.8 L843.8 640.2" stroke="#222" stroke-width="1" fill="none"/>
<path d="M840.6 575.7 L903.0 575.7 L903.0 821.5" stroke="#3c3c4c" stroke-width="1.0" fill="none" />
<path d="M840.6 636.8 L872.4 636.8" stroke="#333" stroke-width="1.0" fill="none" />
<path d="M860.4 636.8 L860.4 821.5" stroke="#3c3c4c" stroke-width="1.0" fill="none" />
<rect x="900" y="587.9" width="6" height="20.5" fill="#d9d9fb"/>
<path d="M903 587.9 L905.8 589.2 L900.2 591.7 L905.8 594.3 L900.2 596.9 L905.8 599.4 L900.2 602.0 L905.8 604.6 L900.2 607.1 L903 608.4" stroke="#222" stroke-width="1" fill="none"/>
<path d="M872.4 612.7 L893.2 624.9 L903.0 624.9" stroke="#222" stroke-width="1.1" fill="none" />
<circle cx="872.4" cy="612.7" r="1.7" fill="#111"/>
<circle cx="893.2" cy="624.9" r="1.7" fill="#111"/>
<circle cx="903.0" cy="624.9" r="1.7" fill="#111"/>
<path d="M874.6 614.0 L879.6 614.8 L877.7 618.1 Z" fill="#111"/>
<path d="M860.4 636.8 L872.4 636.8" stroke="#4a4a5a" stroke-width="1.0" fill="none" />
<circle cx="860.4" cy="636.8" r="1.7" fill="#111"/>
<circle cx="872.4" cy="636.8" r="1.7" fill="#111"/>
<rect x="900" y="649.4" width="6" height="20.5" fill="#d9d9fb"/>
<path d="M903 649.4 L905.8 650.7 L900.2 653.3 L905.8 655.9 L900.2 658.4 L905.8 661.0 L900.2 663.5 L905.8 666.1 L900.2 668.7 L903 669.9" stroke="#222" stroke-width="1" fill="none"/>
<path d="M872.4 674.2 L893.2 686.4 L903.0 686.4" stroke="#222" stroke-width="1.1" fill="none" />
<circle cx="872.4" cy="674.2" r="1.7" fill="#111"/>
<circle cx="893.2" cy="686.4" r="1.7" fill="#111"/>
<circle cx="903.0" cy="686.4" r="1.7" fill="#111"/>
<path d="M874.6 675.5 L879.6 676.4 L877.7 679.6 Z" fill="#111"/>
<path d="M860.4 698.3 L872.4 698.3" stroke="#4a4a5a" stroke-width="1.0" fill="none" />
<circle cx="860.4" cy="698.3" r="1.7" fill="#111"/>
<circle cx="872.4" cy="698.3" r="1.7" fill="#111"/>
<rect x="900" y="711.0" width="6" height="20.5" fill="#d9d9fb"/>
<path d="M903 711.0 L905.8 712.3 L900.2 714.8 L905.8 717.4 L900.2 720.0 L905.8 722.5 L900.2 725.1 L905.8 727.7 L900.2 730.2 L903 731.5" stroke="#222" stroke-width="1" fill="none"/>
<path d="M872.4 735.8 L893.2 748.0 L903.0 748.0" stroke="#222" stroke-width="1.1" fill="none" />
<circle cx="872.4" cy="735.8" r="1.7" fill="#111"/>
<circle cx="893.2" cy="748.0" r="1.7" fill="#111"/>
<circle cx="903.0" cy="748.0" r="1.7" fill="#111"/>
<path d="M874.6 737.1 L879.6 737.9 L877.7 741.2 Z" fill="#111"/>
<path d="M860.4 759.9 L872.4 759.9" stroke="#4a4a5a" stroke-width="1.0" fill="none" />
<circle cx="860.4" cy="759.9" r="1.7" fill="#111"/>
<circle cx="872.4" cy="759.9" r="1.7" fill="#111"/>
<rect x="900" y="772.5" width="6" height="20.5" fill="#d9d9fb"/>
<path d="M903 772.5 L905.8 773.8 L900.2 776.4 L905.8 779.0 L900.2 781.5 L905.8 784.1 L900.2 786.6 L905.8 789.2 L900.2 791.8 L903 793.0" stroke="#222" stroke-width="1" fill="none"/>
<path d="M872.4 797.4 L893.2 809.5 L903.0 809.5" stroke="#222" stroke-width="1.1" fill="none" />
<circle cx="872.4" cy="797.4" r="1.7" fill="#111"/>
<circle cx="893.2" cy="809.5" r="1.7" fill="#111"/>
<circle cx="903.0" cy="809.5" r="1.7" fill="#111"/>
<path d="M874.6 798.6 L879.6 799.5 L877.7 802.8 Z" fill="#111"/>
<path d="M860.4 821.4 L872.4 821.4" stroke="#4a4a5a" stroke-width="1.0" fill="none" />
<circle cx="860.4" cy="821.4" r="1.7" fill="#111"/>
<circle cx="872.4" cy="821.4" r="1.7" fill="#111"/>
<ellipse cx="378.5" cy="686" rx="26.2" ry="3.8" stroke="#333" stroke-width="1" fill="none" stroke-dasharray="4 2.5"/>
<ellipse cx="378.5" cy="711.7" rx="26.2" ry="3.8" stroke="#333" stroke-width="1" fill="none" stroke-dasharray="4 2.5"/>
<path d="M352.3 691.6 L352.3 700.4" stroke="#333" stroke-width="1.0" fill="none" />
<path d="M352.3 706.0 L352.3 713.0" stroke="#333" stroke-width="1.0" fill="none" />
<circle cx="404.6" cy="686.0" r="1.4" fill="#111"/>
<circle cx="404.6" cy="711.7" r="1.4" fill="#111"/>
<text x="402.0" y="665.9" text-anchor="end" font-size="7.3" fill="#36364c" >NCA</text>
<text x="402.0" y="738.6" text-anchor="end" font-size="7.3" fill="#36364c" >NCA</text>
<text x="261.3" y="742.8" text-anchor="end" font-size="7.3" fill="#36364c" >(IN MAIN WIRING</text>
<text x="261.3" y="751.8" text-anchor="end" font-size="7.3" fill="#36364c" >HARNESS,</text>
<text x="261.3" y="760.8" text-anchor="end" font-size="7.3" fill="#36364c" >NEAR BREAKOUT</text>
<text x="261.3" y="769.8" text-anchor="end" font-size="7.3" fill="#36364c" >FOR PASSENGER</text>
<text x="262.9" y="778.3" text-anchor="end" font-size="7.3" fill="#36364c" >AIR BAG MODULE)</text>
<text x="264.0" y="788.8" text-anchor="end" font-size="7.3" fill="#36364c" >S207</text>
</g>
</svg>
<div id="btm"></div>
</body></html>
